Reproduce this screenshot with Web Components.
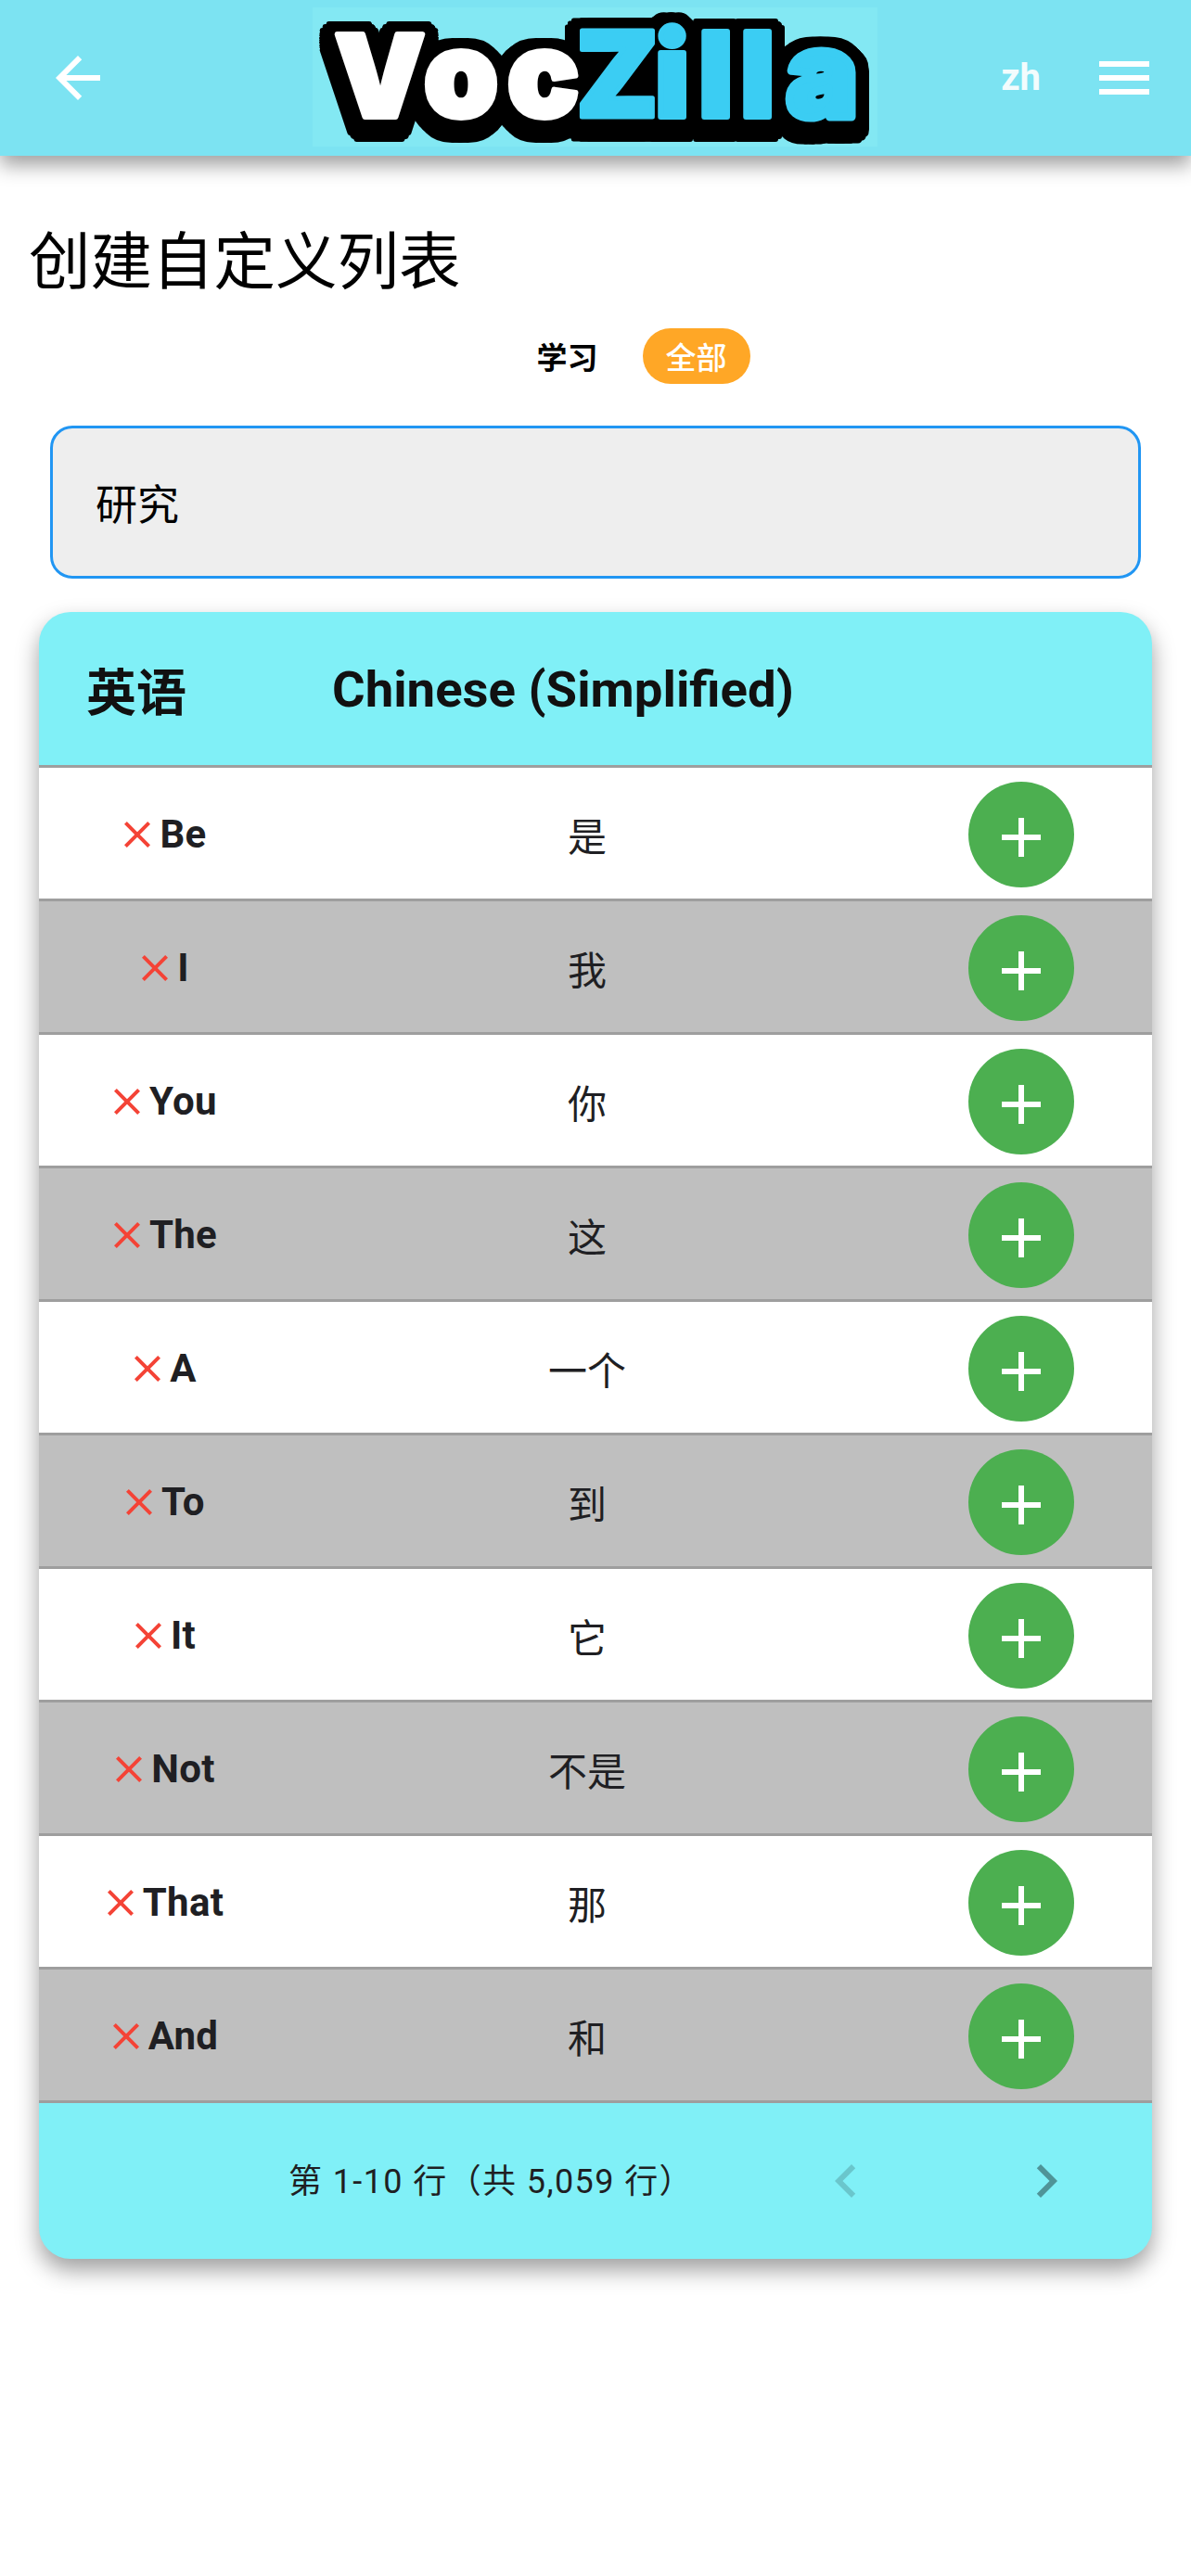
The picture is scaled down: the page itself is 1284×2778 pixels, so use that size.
<!DOCTYPE html>
<html lang="zh"><head><meta charset="utf-8"><title>VocZilla</title>
<style>
html,body{margin:0;padding:0;background:#fff}
body{font-family:Roboto,"Noto Sans CJK SC",sans-serif;width:1284px;min-height:2778px;overflow-x:hidden}
</style></head><body>
<vz-header></vz-header>
<vz-page-title>创建自定义列表</vz-page-title>
<vz-tabs></vz-tabs>
<vz-search value="研究"></vz-search>
<vz-table>
  <vz-row en="Be" zh="是"></vz-row>
  <vz-row en="I" zh="我" alt></vz-row>
  <vz-row en="You" zh="你"></vz-row>
  <vz-row en="The" zh="这" alt></vz-row>
  <vz-row en="A" zh="一个"></vz-row>
  <vz-row en="To" zh="到" alt></vz-row>
  <vz-row en="It" zh="它"></vz-row>
  <vz-row en="Not" zh="不是" alt></vz-row>
  <vz-row en="That" zh="那"></vz-row>
  <vz-row en="And" zh="和" alt></vz-row>
</vz-table>
<script>
const FONT='Roboto,"Noto Sans CJK SC",sans-serif';
const icon=(d,s,c,o)=>`<svg width="${s}" height="${s}" viewBox="0 0 24 24" fill="${c}" ${o?`opacity="${o}"`:''} style="display:block;flex:none"><path d="${d}"/></svg>`;
class Base extends HTMLElement{
  render(h){this.attachShadow({mode:'open'}).innerHTML=h}
}
const t=(ch,x,size,col,sw=6)=>`<tspan x="${x}" font-size="${size}" fill="${col}" stroke="${col}" stroke-width="${sw}">${ch}</tspan>`;
customElements.define('vz-header',class extends Base{connectedCallback(){this.render(`<style>
:host{display:flex;align-items:center;height:168px;background:#7ce3f2;box-shadow:0 10px 20px rgba(0,0,0,.38);position:relative;z-index:2;font-family:${FONT}}
.back{margin-left:48px}
.logo{position:absolute;left:337px;top:8px;width:609px;height:150px;background:#83e8f3}
.logo svg{display:block;overflow:visible;filter:drop-shadow(8px 0 0 #000) drop-shadow(-8px 0 0 #000) drop-shadow(0 3px 0 #000) drop-shadow(0 -3px 0 #000) drop-shadow(3.5px 3.5px 0 #000) drop-shadow(-3.5px -3.5px 0 #000) drop-shadow(3.5px -3.5px 0 #000) drop-shadow(-3.5px 3.5px 0 #000) drop-shadow(0 5px 0 #000) drop-shadow(0 5px 0 #000) drop-shadow(0 5px 0 #000)}
.logo text{font-family:Inter,sans-serif;font-weight:900;stroke-linejoin:round}
.zh{margin-left:auto;font:700 40px/1 Roboto,sans-serif;color:rgba(255,255,255,.92)}
.menu{margin:0 36px 0 54px}
</style>
<div class="back">${icon('M20 11H7.83l5.59-5.59L12 4l-8 8 8 8 1.41-1.41L7.83 13H20v-2z',72,'#fff')}</div>
<div class="logo"><svg width="609" height="150" viewBox="0 0 609 150"><text y="118">${t('V',24,122,'#fff')}${t('o',120,128,'#fff')}${t('c',210,128,'#fff')}${t('Z',284,128,'#3bcdf3',5)}${t('i',369,126,'#3bcdf3')}${t('l',416,126,'#3bcdf3')}${t('l',461,126,'#3bcdf3')}${t('a',511,128,'#3bcdf3',9)}</text></svg></div>
<div class="zh">zh</div>
<div class="menu">${icon('M3 18h18v-2H3v2zm0-5h18v-2H3v2zm0-7v2h18V6H3z',72,'#fff')}</div>`)}});
customElements.define('vz-page-title',class extends Base{connectedCallback(){this.render(`<style>
:host{display:block;padding:61px 0 0 31px;height:115px;font:400 66.5px/96px "Noto Sans CJK SC",sans-serif;color:#000}
</style><slot></slot>`)}});
customElements.define('vz-tabs',class extends Base{connectedCallback(){this.render(`<style>
:host{display:flex;justify-content:center;align-items:center;gap:48px;margin-top:10px;height:60px;padding-left:108px;font:500 33px/1 "Noto Sans CJK SC",sans-serif}
.a{color:#000;font-weight:700;margin-left:-5px}
.b{background:#ffa726;color:#fff;width:116px;height:60px;border-radius:30px;display:flex;align-items:center;justify-content:center}
</style><span class="a">学习</span><span class="b">全部</span>`)}});
customElements.define('vz-search',class extends Base{connectedCallback(){this.render(`<style>
:host{display:block;margin:45px 54px 0 54px}
.box{height:165px;box-sizing:border-box;border:3px solid #2196f3;border-radius:24px;background:#eee;display:flex;align-items:center;padding:0 46px;font:400 45px/1 "Noto Sans CJK SC",sans-serif;color:#000}
</style><div class="box">${this.getAttribute('value')}</div>`)}});
customElements.define('vz-table',class extends Base{connectedCallback(){this.render(`<style>
:host{display:block;margin:36px 42px 0;border-radius:34px;background:#80f0f7;box-shadow:0 12px 24px rgba(0,0,0,.38);overflow:hidden;font-family:${FONT};color:#1f1f23}
.head{height:165px;border-bottom:3px solid #9e9e9e;display:flex;align-items:center;color:#111;padding-left:51px}
.head .e{font:700 54px/1 "Noto Sans CJK SC",sans-serif;width:265px;margin-top:2px}
.head .c{font:700 54.5px/1 Roboto,sans-serif;margin-top:2px}
.foot{height:168px;display:flex;align-items:center;position:relative;font:400 36px/1 Roboto,"Noto Sans CJK SC",sans-serif}
.txt{margin-left:269px;margin-top:2px;letter-spacing:1.4px;white-space:nowrap;color:#1f1f23}
.p{position:absolute;top:48px}
</style><div class="head"><span class="e">英语</span><span class="c">Chinese (Simplified)</span></div>
<slot></slot>
<div class="foot"><span class="txt">第 1-10 行（共 5,059 行）</span>
<span class="p" style="left:834px">${icon('M15.41 7.41L14 6l-6 6 6 6 1.41-1.41L10.83 12z',72,'#000','.17')}</span>
<span class="p" style="left:1050px">${icon('M10 6L8.59 7.41 13.17 12l-4.58 4.58L10 18l6-6z',72,'#000','.38')}</span></div>`)}});
customElements.define('vz-row',class extends Base{connectedCallback(){const alt=this.hasAttribute('alt');this.render(`<style>
:host{display:grid;grid-template-columns:263px 656px 1fr;align-items:center;height:141px;background:${alt?'#bfbfbf':'#fff'};border-bottom:3px solid #9e9e9e;color:#1f1f23}
.en{display:flex;align-items:center;justify-content:center;font:700 42px/1 Roboto,sans-serif;letter-spacing:.3px;margin-top:3px}
.zh{text-align:center;font:400 42px/1 "Noto Sans CJK SC",sans-serif;margin-top:2px}
.add{justify-self:end;margin-right:84px;margin-top:2px;width:114px;height:114px;border-radius:50%;background:#4caf50;display:flex;align-items:center;justify-content:center}
.add svg{margin-top:6px}
</style><div class="en">${icon('M19 6.41L17.59 5 12 10.59 6.41 5 5 6.41 10.59 12 5 17.59 6.41 19 12 13.41 17.59 19 19 17.59 13.41 12z',48,'#f44336')}<span>${this.getAttribute('en')}</span></div>
<div class="zh">${this.getAttribute('zh')}</div>
<div class="add">${icon('M19 13h-6v6h-2v-6H5v-2h6V5h2v6h6v2z',72,'#fff')}</div>`)}});
</script>
</body></html>
